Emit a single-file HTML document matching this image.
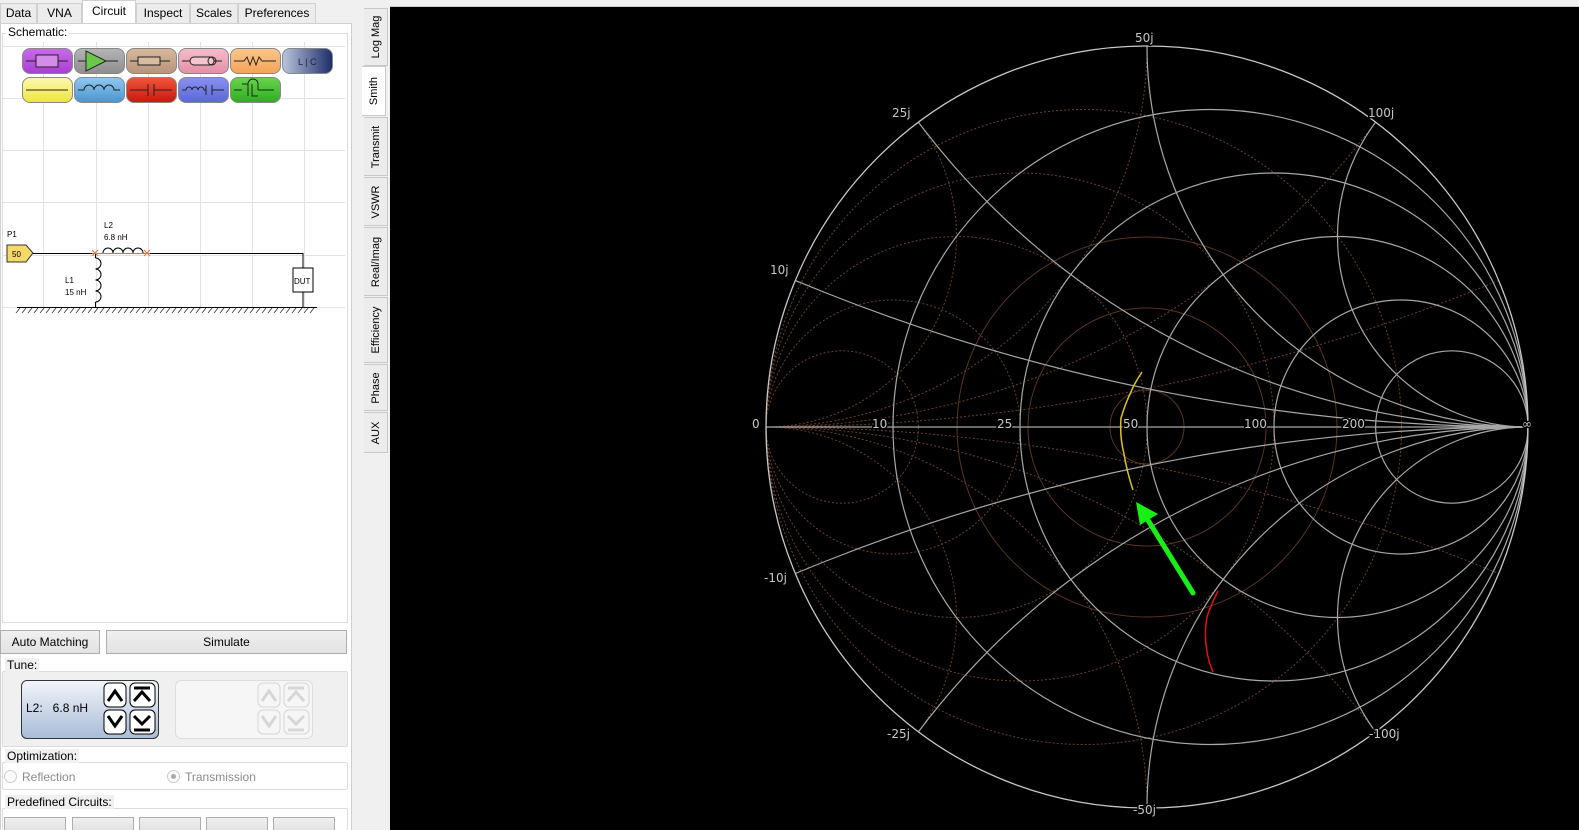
<!DOCTYPE html>
<html><head><meta charset="utf-8"><style>
*{box-sizing:border-box}
html,body{overflow:hidden}
body{margin:0;width:1579px;height:830px;overflow:hidden;background:#f0f0f0;font-family:"Liberation Sans",sans-serif;font-size:12px;color:#000;position:relative}
.abs{position:absolute}
.tab{position:absolute;top:3px;height:20px;border:1px solid #d0d0d0;border-bottom:none;background:#ececec;text-align:center;line-height:19px;font-size:12px}
.btn{position:absolute;border:1px solid #adadad;background:linear-gradient(#f0f0f0,#e2e2e2);text-align:center;font-size:12px}
.comp{position:absolute;width:51px;height:26px;border-radius:8px;border:1px solid #888}
.grp{position:absolute;border:1px solid #dcdcdc;border-radius:2px}
.lbl{position:absolute;background:#f0f0f0;padding:0 2px;font-size:12px}
.vt{position:absolute;left:364px;width:24px;border:1px solid #c8c8c8;border-left:none;background:#ececec}
.vt span{position:absolute;left:50%;top:50%;transform:translate(-50%,-50%) rotate(-90deg);white-space:nowrap;font-size:11px}
</style></head><body>
<div class="tab" style="left:0;width:37px">Data</div>
<div class="tab" style="left:37px;width:45px">VNA</div>
<div class="tab" style="left:82px;width:54px;top:0;height:24px;background:#fff;line-height:20px">Circuit</div>
<div class="tab" style="left:136px;width:54px">Inspect</div>
<div class="tab" style="left:190px;width:48px">Scales</div>
<div class="tab" style="left:238px;width:78px">Preferences</div>
<div class="abs" style="left:0;top:23px;width:352px;height:807px;border:1px solid #d0d0d0;border-bottom:none;background:#fff"></div>
<div class="abs" style="left:2px;top:33px;width:346px;height:590px;border:1px solid #dcdcdc;background:#fff"></div>
<div class="abs" style="left:6px;top:25px;background:#fff;padding:0 2px">Schematic:</div>
<svg class="abs" style="left:0;top:0" width="352" height="330">
<g stroke="#e2e2e2" stroke-width="1">
<line x1="43.5" y1="42" x2="43.5" y2="310"/><line x1="96.5" y1="42" x2="96.5" y2="310"/><line x1="148.5" y1="42" x2="148.5" y2="310"/><line x1="200.5" y1="42" x2="200.5" y2="310"/><line x1="252.5" y1="42" x2="252.5" y2="310"/><line x1="304.5" y1="42" x2="304.5" y2="310"/>
<line x1="3" y1="46.5" x2="345" y2="46.5"/><line x1="3" y1="98.5" x2="345" y2="98.5"/><line x1="3" y1="150.5" x2="345" y2="150.5"/><line x1="3" y1="202.5" x2="345" y2="202.5"/><line x1="3" y1="255.5" x2="345" y2="255.5"/><line x1="3" y1="307.5" x2="345" y2="307.5"/>
</g>
<polygon points="7,245 26,245 33,253 26,262 7,262" fill="#f4d96a" stroke="#333"/>
<text x="12" y="257" font-size="8" font-family="Liberation Sans">50</text>
<text x="7" y="237" font-size="8" font-family="Liberation Sans">P1</text>
<path d="M33 253.5H303V268M303 292V307M95.5 253V258M95.5 302V307" stroke="#000" fill="none"/>
<rect x="293" y="268" width="20" height="24" fill="#fff" stroke="#000"/>
<text x="294" y="284" font-size="8" font-family="Liberation Sans">DUT</text>
<path d="M95.5 258a5 5 0 0 1 0 11a5 5 0 0 1 0 11a5 5 0 0 1 0 11a5 5 0 0 1 0 11" stroke="#000" fill="none"/>
<line x1="92" y1="253.5" x2="150" y2="253.5" stroke="#e86a40"/>
<path d="M103 253a5 5 0 0 1 10 0a5 5 0 0 1 10 0a5 5 0 0 1 10 0a5 5 0 0 1 10 0" stroke="#000" fill="none"/>
<path d="M92 250l6 6M98 250l-6 6M144 250l6 6M150 250l-6 6" stroke="#e86a40"/>
<text x="104" y="228" font-size="8" font-family="Liberation Sans">L2</text>
<text x="104" y="240" font-size="8" font-family="Liberation Sans">6.8 nH</text>
<text x="65" y="283" font-size="8" font-family="Liberation Sans">L1</text>
<text x="65" y="295" font-size="8" font-family="Liberation Sans">15 nH</text>
<line x1="17" y1="307.5" x2="317" y2="307.5" stroke="#000"/>
<path d="M20 308l-4 5M26 308l-4 5M32 308l-4 5M38 308l-4 5M44 308l-4 5M50 308l-4 5M56 308l-4 5M62 308l-4 5M68 308l-4 5M74 308l-4 5M80 308l-4 5M86 308l-4 5M92 308l-4 5M98 308l-4 5M104 308l-4 5M110 308l-4 5M116 308l-4 5M122 308l-4 5M128 308l-4 5M134 308l-4 5M140 308l-4 5M146 308l-4 5M152 308l-4 5M158 308l-4 5M164 308l-4 5M170 308l-4 5M176 308l-4 5M182 308l-4 5M188 308l-4 5M194 308l-4 5M200 308l-4 5M206 308l-4 5M212 308l-4 5M218 308l-4 5M224 308l-4 5M230 308l-4 5M236 308l-4 5M242 308l-4 5M248 308l-4 5M254 308l-4 5M260 308l-4 5M266 308l-4 5M272 308l-4 5M278 308l-4 5M284 308l-4 5M290 308l-4 5M296 308l-4 5M302 308l-4 5M308 308l-4 5M314 308l-4 5" stroke="#333" stroke-width="0.8"/>
</svg>
<div class="comp" style="left:22px;top:48px;background:linear-gradient(#c96ae8,#a83fd6)"></div>
<div class="comp" style="left:74px;top:48px;background:linear-gradient(#b4b4b4,#8e8e8e)"></div>
<div class="comp" style="left:126px;top:48px;background:linear-gradient(#d8b89a,#b8957a)"></div>
<div class="comp" style="left:178px;top:48px;background:linear-gradient(#f6bccb,#e58fa6)"></div>
<div class="comp" style="left:230px;top:48px;background:linear-gradient(#fcc68a,#f3a458)"></div>
<div class="comp" style="left:282px;top:48px;background:linear-gradient(90deg,#b8c4dc,#1e2e6a)"></div>
<div class="comp" style="left:22px;top:77px;background:linear-gradient(#fdf7b0,#eee63e)"></div>
<div class="comp" style="left:74px;top:77px;background:linear-gradient(#8ec8f0,#4b95d0)"></div>
<div class="comp" style="left:126px;top:77px;background:linear-gradient(#f0543a,#c9190f)"></div>
<div class="comp" style="left:178px;top:77px;background:linear-gradient(#8890f0,#5a68d8)"></div>
<div class="comp" style="left:230px;top:77px;background:linear-gradient(#66d44a,#2fae22)"></div>
<svg class="abs" style="left:0;top:0" width="340" height="110" fill="none" stroke="#222" stroke-width="1">
<path d="M26 61H36M58 61H68"/><rect x="36" y="55" width="22" height="12" fill="#d48ce8"/>
<path d="M78 61H86M106 61H118"/><polygon points="86,51 86,71 106,61" fill="#6cc84a"/>
<path d="M130 61H138M160 61H170"/><rect x="138" y="57" width="22" height="8" fill="#d8bca0"/>
<path d="M182 61H190M214 61H222"/><rect x="190" y="57" width="24" height="8" rx="4" fill="#f4c4d0"/><circle cx="212" cy="61" r="4"/>
<path d="M234 61H244l3-4l3 8l3-8l3 8l3-8l3 4H276"/>
<text x="298" y="65" font-size="9" fill="#223" stroke="none" font-family="Liberation Sans">L | C</text>
<path d="M26 90H68"/>
<path d="M78 90H84a5 5 0 0 1 10 0a5 5 0 0 1 10 0a5 5 0 0 1 10 0H120"/>
<path d="M130 90H148M154 90H172M148 84V96M154 84V96"/>
<path d="M182 90h4a3 3 0 0 1 6 0a3 3 0 0 1 6 0a3 3 0 0 1 6 0h2M206 85V95M212 85V95M212 90H224"/>
<path d="M234 90H242M242 84H248V96M252 84V96H258M258 90H274M248 84a5 5 0 0 1 10 0V90"/>
</svg>
<div class="btn" style="left:0;top:630px;width:100px;height:24px;line-height:22px">Auto Matching</div>
<div class="btn" style="left:106px;top:630px;width:241px;height:24px;line-height:22px">Simulate</div>
<div class="grp" style="left:2px;top:671px;width:346px;height:76px;background:#f0f0f0"></div>
<div class="lbl" style="left:5px;top:658px">Tune:</div>
<div class="abs" style="left:21px;top:680px;width:138px;height:59px;border:1px solid #333;border-radius:6px;background:linear-gradient(#f2f5fa,#a9bcd8)"></div>
<div class="abs" style="left:26px;top:701px">L2:&nbsp;&nbsp;&nbsp;6.8 nH</div>
<svg class="abs" style="left:100px;top:680px" width="60" height="60" fill="none" stroke="#000">
<rect x="4" y="3" width="22" height="24" rx="5" fill="#fff"/><rect x="30" y="3" width="25" height="24" rx="5" fill="#fff"/>
<rect x="4" y="30" width="22" height="24" rx="5" fill="#fff"/><rect x="30" y="30" width="25" height="24" rx="5" fill="#fff"/>
<path d="M8 21l7-10l7 10M34 21l8-9l8 9M8 36l7 10l7-10M34 36l8 8l8-8" stroke-width="3"/>
<path d="M34 8h16M34 50h16" stroke-width="3"/>
</svg>
<div class="abs" style="left:175px;top:680px;width:138px;height:59px;border:1px solid #ddd;border-radius:6px;background:#f6f6f6"></div>
<svg class="abs" style="left:254px;top:680px" width="60" height="60" fill="none" stroke="#d6d6d6">
<rect x="4" y="3" width="22" height="24" rx="5"/><rect x="30" y="3" width="25" height="24" rx="5"/>
<rect x="4" y="30" width="22" height="24" rx="5"/><rect x="30" y="30" width="25" height="24" rx="5"/>
<path d="M8 21l7-10l7 10M34 21l8-9l8 9M8 36l7 10l7-10M34 36l8 8l8-8M34 8h16M34 50h16" stroke-width="3"/>
</svg>
<div class="grp" style="left:2px;top:762px;width:346px;height:28px"></div>
<div class="lbl" style="left:5px;top:749px">Optimization:</div>
<div class="abs" style="left:4px;top:770px;width:13px;height:13px;border:1px solid #ccc;border-radius:50%;background:#fafafa"></div>
<div class="abs" style="left:22px;top:770px;color:#8a8a8a">Reflection</div>
<div class="abs" style="left:167px;top:770px;width:13px;height:13px;border:1px solid #ccc;border-radius:50%;background:#fafafa"><div style="margin:3px;width:5px;height:5px;border-radius:50%;background:#aaa"></div></div>
<div class="abs" style="left:185px;top:770px;color:#8a8a8a">Transmission</div>
<div class="grp" style="left:2px;top:808px;width:346px;height:22px;border-bottom:none"></div>
<div class="lbl" style="left:5px;top:795px">Predefined Circuits:</div>
<div class="btn" style="left:4px;top:817px;width:62px;height:13px;border-bottom:none"></div>
<div class="btn" style="left:72px;top:817px;width:62px;height:13px;border-bottom:none"></div>
<div class="btn" style="left:139px;top:817px;width:62px;height:13px;border-bottom:none"></div>
<div class="btn" style="left:206px;top:817px;width:62px;height:13px;border-bottom:none"></div>
<div class="btn" style="left:273px;top:817px;width:62px;height:13px;border-bottom:none"></div>
<div class="vt" style="top:8px;height:58px"><span>Log Mag</span></div>
<div class="vt" style="top:66px;height:50px;background:#fff;left:362px"><span>Smith</span></div>
<div class="vt" style="top:117px;height:59px"><span>Transmit</span></div>
<div class="vt" style="top:177px;height:49px"><span>VSWR</span></div>
<div class="vt" style="top:227px;height:69px"><span>Real/Imag</span></div>
<div class="vt" style="top:297px;height:66px"><span>Efficiency</span></div>
<div class="vt" style="top:364px;height:47px"><span>Phase</span></div>
<div class="vt" style="top:412px;height:41px"><span>AUX</span></div>
<svg class="abs" style="left:390px;top:7px;background:#000" width="1189" height="823" viewBox="390 7 1189 823">
<defs><clipPath id="c"><circle cx="1147" cy="427" r="381"/></clipPath></defs>
<g clip-path="url(#c)" fill="none">
<g stroke="#6a4028" stroke-dasharray="2,2" stroke-width="1">
<circle cx="1084" cy="427" r="317.5"/><circle cx="1020" cy="427" r="254"/><circle cx="956.5" cy="427" r="190.5"/><circle cx="893" cy="427" r="127"/><circle cx="842.2" cy="427" r="76.2"/>
<circle cx="766" cy="-1478" r="1905"/><circle cx="766" cy="2332" r="1905"/>
<circle cx="766" cy="-335" r="762"/><circle cx="766" cy="1189" r="762"/>
<circle cx="766" cy="46" r="381"/><circle cx="766" cy="808" r="381"/>
<circle cx="766" cy="236.5" r="190.5"/><circle cx="766" cy="617.5" r="190.5"/>
</g>
<g stroke="#5a3420" stroke-width="1">
<circle cx="1147" cy="427" r="37"/><circle cx="1147" cy="427" r="119"/><circle cx="1147" cy="427" r="190"/>
</g>
<g stroke="#a8a8a8" stroke-width="1.2">
<circle cx="1210.5" cy="427" r="317.5"/><circle cx="1274" cy="427" r="254"/><circle cx="1337.5" cy="427" r="190.5"/><circle cx="1401" cy="427" r="127"/><circle cx="1451.8" cy="427" r="76.2"/>
<circle cx="1528" cy="-1478" r="1905"/><circle cx="1528" cy="2332" r="1905"/>
<circle cx="1528" cy="-335" r="762"/><circle cx="1528" cy="1189" r="762"/>
<circle cx="1528" cy="46" r="381"/><circle cx="1528" cy="808" r="381"/>
<circle cx="1528" cy="236.5" r="190.5"/><circle cx="1528" cy="617.5" r="190.5"/>
<line x1="766" y1="427" x2="1528" y2="427"/>
</g>
</g>
<circle cx="1147" cy="427" r="381" fill="none" stroke="#c8c8c8" stroke-width="1.3"/>
<g fill="#c8c8c8" font-size="12" font-family="DejaVu Sans,sans-serif" stroke="#000" stroke-width="3" paint-order="stroke">
<text x="1135" y="42">50j</text><text x="892" y="117">25j</text><text x="1368" y="117">100j</text>
<text x="770" y="274">10j</text><text x="764" y="582">-10j</text><text x="887" y="738">-25j</text>
<text x="1369" y="738">-100j</text><text x="1133" y="814">-50j</text>
<text x="752" y="428">0</text><text x="872" y="428">10</text><text x="997" y="428">25</text><text x="1123" y="428">50</text>
<text x="1244" y="428">100</text><text x="1342" y="428">200</text><text x="1522" y="428">∞</text>
</g>
<path d="M1142 372c-4 6-8 12-11 20c-4 8-7 16-10 26c-1 12 0 24 3 36c2 12 5 24 9 36" stroke="#e3c020" stroke-width="1.5" fill="none"/>
<path d="M1218 591c-4 8-8 16-11 26c-2 12-2 24 0 34c1 8 3 14 6 21" stroke="#e01010" stroke-width="1.5" fill="none"/>
<line x1="1193" y1="593" x2="1146" y2="517" stroke="#16f016" stroke-width="5" stroke-linecap="round"/>
<polygon points="1136,502 1158,514 1140,525" fill="#16f016"/>
</svg>
<div class="abs" style="left:390px;top:0;width:1189px;height:7px;background:#f0f0f0;border-bottom:1px solid #ccc"></div>
</body></html>
